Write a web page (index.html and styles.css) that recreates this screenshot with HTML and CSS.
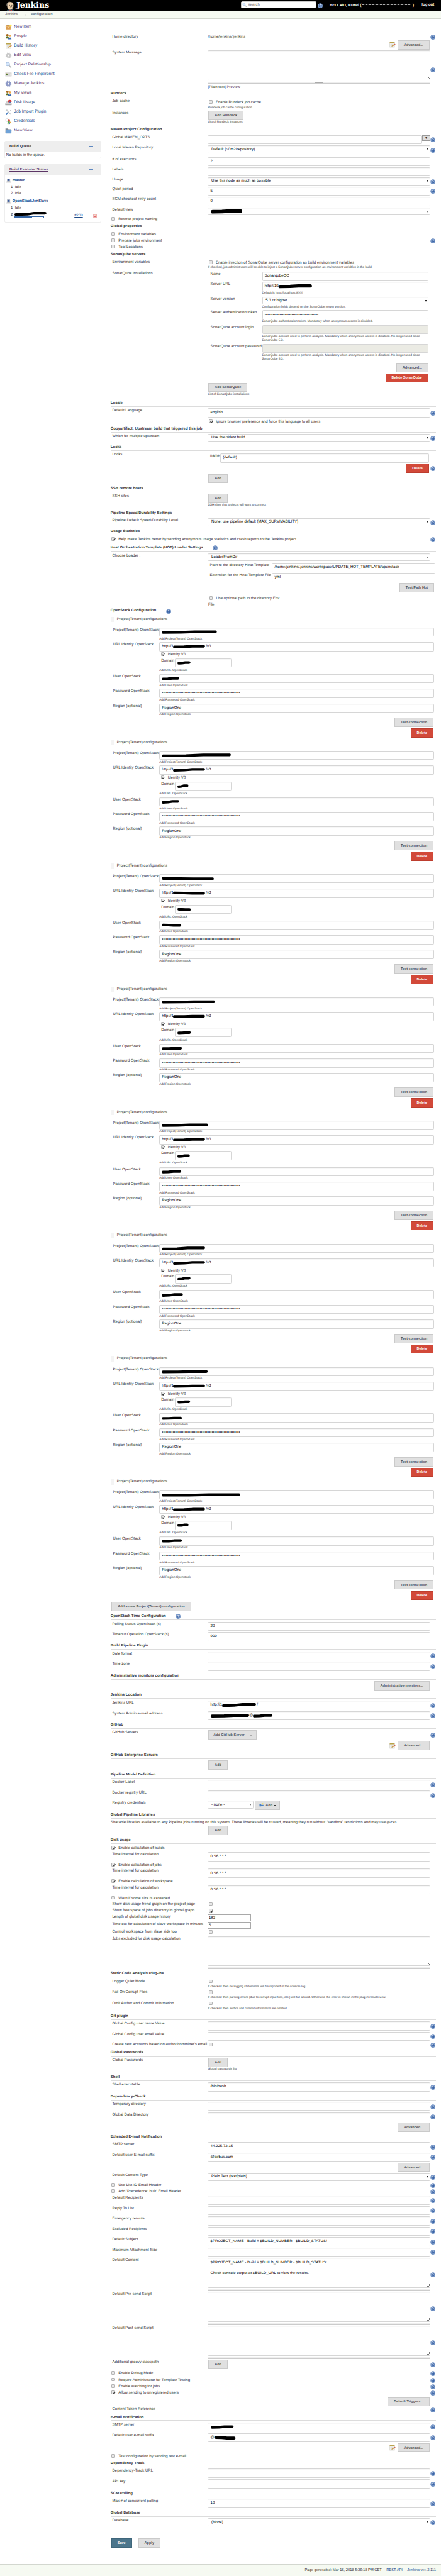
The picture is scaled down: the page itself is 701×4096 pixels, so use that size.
FILE: index.html
```html
<!DOCTYPE html>
<html lang="en">
<head>
<meta charset="utf-8">
<title>Configure System [Jenkins]</title>
<link rel="stylesheet" href="styles.css">
</head>
<body>
<svg class="sprite" aria-hidden="true">
  <symbol id="i-help" viewBox="0 0 16 16"><circle cx="8" cy="8" r="7.3" fill="#6489c0"/><circle cx="8" cy="8" r="5.8" fill="#3c66a8" stroke="#c3d3ea" stroke-width="1"/><path d="M6 6.400c0-2.600 4.200-2.400 4 0C9.900 7.700 8.100 7.700 8.100 9.200M8.100 10.600v1.300" fill="none" stroke="#fff" stroke-width="1.500"/></symbol>
  <symbol id="i-notepad" viewBox="0 0 24 24"><path d="M3 4h18v17H3z" fill="#f2f2ee" stroke="#bdbdb6"/><path d="M3 2h18v4H3z" fill="#b9a24a"/><path d="M6 10h9M6 13h6M6 16h5" stroke="#c2c2c2"/><path d="M10 18l2-4 10-5 1 3-10 5z" fill="#e0a03c" stroke="#8f6a28" stroke-width=".6"/><path d="M20 10l3-1 1 2-3 1z" fill="#d9534f"/></symbol>
  <symbol id="i-box" viewBox="0 0 24 24"><path d="M4 11h16v9H4z" fill="#dd9f50"/><path d="M1 9l4-4h14l4 4-3 3H4z" fill="#edbb74" stroke="#c98a3a" stroke-width=".7"/><path d="M5 6h13l2 3H4z" fill="#a86f2c"/><path d="M9 12h6v3H9z" fill="#f6dba8"/><circle cx="20" cy="5" r="3.500" fill="#ffe94a"/></symbol>
  <symbol id="i-people" viewBox="0 0 24 24"><circle cx="8" cy="7" r="4.800" fill="#a8691f"/><path d="M2 19c0-9 12-9 12 0z" fill="#5c7020"/><circle cx="17" cy="9" r="4.500" fill="#f0a848"/><path d="M10 22c0-10 13-10 13 0z" fill="#3a6cb2"/><path d="M16 14h3l-1.500 5z" fill="#fff"/></symbol>
  <symbol id="i-gear" viewBox="0 0 24 24"><circle cx="12" cy="12" r="8.700" fill="none" stroke="currentColor" stroke-width="5" stroke-dasharray="3.900 2.930"/><circle cx="12" cy="12" r="5.600" fill="none" stroke="currentColor" stroke-width="5"/></symbol>
  <symbol id="i-search" viewBox="0 0 24 24"><path d="M14 14l8 8" stroke="#b5b8bc" stroke-width="4"/><circle cx="9.500" cy="9" r="7" fill="#d6e7fb" stroke="#a4bcdc" stroke-width="2"/></symbol>
  <symbol id="i-card" viewBox="0 0 24 24"><path d="M1 6h22v13H1z" fill="#e9e9e7" stroke="#c4c4c2"/><circle cx="6" cy="10" r="2" fill="#a06a28"/><path d="M3 14c0-4 6-4 6 0z" fill="#50782a"/><path d="M11 9h9M11 12h7M4 16h15" stroke="#b2b2b2"/></symbol>
  <symbol id="i-disk" viewBox="0 0 24 24"><path d="M5 8h14l4 7v6H1v-6z" fill="#d4d4d4" stroke="#a5a5a5"/><path d="M1 16h22v5H1z" fill="#a7a7a7"/><ellipse cx="17" cy="7" rx="6.500" ry="5" fill="#dc3636"/><path d="M17 7l4 4a6 5 0 0 1-6 .5z" fill="#4577c4"/></symbol>
  <symbol id="i-tools" viewBox="0 0 24 24"><path d="M4 4l17 17" stroke="#c6cacd" stroke-width="3.500"/><path d="M2 5l3 3 3-3-3-3" fill="none" stroke="#c6cacd" stroke-width="2"/><path d="M22 3L12 13" stroke="#b7bcc2" stroke-width="2"/><path d="M11 13l-8 9" stroke="#4f83c4" stroke-width="5"/></symbol>
  <symbol id="i-keys" viewBox="0 0 24 24"><circle cx="7" cy="7" r="5" fill="none" stroke="#c0c4c8" stroke-width="2.200"/><path d="M12 8l9 10" stroke="#e0a63a" stroke-width="3.500"/><path d="M13 8l3 13" stroke="#3b72c0" stroke-width="4"/><path d="M13 8l-3 13" stroke="#59ad47" stroke-width="4"/><circle cx="14" cy="8" r="3.500" fill="#d84836"/></symbol>
  <symbol id="i-folder" viewBox="0 0 24 24"><path d="M1 3h9l2 3h9v15H1z" fill="#7f8b97"/><path d="M3 8h20l-1 13H2z" fill="#6ea2d8" stroke="#4b80ba" stroke-width=".7"/></symbol>
  <symbol id="i-computer" viewBox="0 0 16 16"><path d="M3 1h10v9H3z" fill="#3557a0" stroke="#b9bcc0" stroke-width="1.500"/><path d="M1 11h14l1 4H0z" fill="#cfd0d0" stroke="#999" stroke-width=".6"/></symbol>
  <symbol id="i-key" viewBox="0 0 16 16"><path d="M1 6h6v2h8v3H7v3H1z" fill="#4b82c4"/><circle cx="12" cy="5" r="2.500" fill="#fbe24c"/></symbol>
  <symbol id="i-butler" viewBox="0 0 30 34"><path d="M2 34c0-6 7-8 13-8s13 2 13 8z" fill="#335061"/><path d="M4 12C4 0 24-2 25 11c1 10-4 17-11 17C8 28 4 22 4 12z" fill="#eed2b0" stroke="#2b2118" stroke-width=".8"/><path d="M3 16C0 4 9 0 14 1 8 3 7 8 7 14z" fill="#8d8478"/><path d="M11 13h3M18 13h3M14 19c2-2 6-2 7 0" stroke="#32281f" stroke-width="1.500" fill="none"/><path d="M10 28l5 2 5-2v6l-5-2-5 2z" fill="#d33833"/></symbol>
</svg>

<div class="page">
  <header class="header">
    <a class="logo"><svg class="butler"><use href="#i-butler"/></svg><span>Jenkins</span></a>
    <div class="search"><svg><use href="#i-search"/></svg><span>search</span></div>
    <svg class="icon-help header-help"><use href="#i-help"/></svg>
    <div class="login"><b>BELLAID, Kamel (</b><i class="masked"></i><b>)</b><b class="logout">log out</b></div>
  </header>
  <nav class="breadcrumbs"><a>Jenkins</a><i class="crumb-arrow"></i><a>configuration</a></nav>

  <div class="columns">
    <aside class="side">
      <ul class="tasks">
        <li class="visited"><svg><use href="#i-box"/></svg>New Item</li>
        <li class="visited"><svg><use href="#i-people"/></svg>People</li>
        <li><svg><use href="#i-notepad"/></svg>Build History</li>
        <li class="visited"><svg class="gear-grey"><use href="#i-gear"/></svg>Edit View</li>
        <li class="visited"><svg><use href="#i-search"/></svg>Project Relationship</li>
        <li><svg><use href="#i-card"/></svg>Check File Fingerprint</li>
        <li class="visited"><svg class="gear-blue"><use href="#i-gear"/></svg>Manage Jenkins</li>
        <li class="visited"><svg><use href="#i-people"/></svg>My Views</li>
        <li><svg><use href="#i-disk"/></svg>Disk Usage</li>
        <li><svg><use href="#i-tools"/></svg>Job Import Plugin</li>
        <li><svg><use href="#i-keys"/></svg>Credentials</li>
        <li class="visited"><svg><use href="#i-folder"/></svg>New View</li>
      </ul>

      <section class="pane queue">
        <h3>Build Queue<i class="collapse"></i></h3>
        <p>No builds in the queue.</p>
      </section>

      <section class="pane executors">
        <h3><u>Build Executor Status</u><i class="collapse"></i></h3>
        <div class="node"><svg><use href="#i-computer"/></svg>master</div>
        <div class="exec"><span>1</span>Idle</div>
        <div class="exec"><span>2</span>Idle</div>
        <div class="node second"><svg><use href="#i-computer"/></svg>OpenStackJenSlave</div>
        <div class="exec"><span>1</span>Idle</div>
        <div class="exec running">
          <span>2</span>
          <div class="job"><svg class="scribble" width="98" height="12" viewBox="0 0 98 12"><path d="M4 8L40 7 60 4H94" /></svg><div class="progress"><i></i></div></div>
          <a>#230</a><i class="stop">×</i>
        </div>
      </section>
    </aside>

    <main class="form" id="form"></main>
  </div>

  <footer class="footer"><span>Page generated: Mar 16, 2018 5:36:18 PM CET</span><a>REST API</a><a>Jenkins ver. 2.111</a></footer>
</div>
<script src="form.js"></script>
</body>
</html>
```
FILE: styles.css
```css
* { box-sizing: border-box; }
html, body { margin: 0; overflow: hidden; background: #fff; }
.sprite { display: none; }
.page {
  zoom: .5188;
  width: 1351.500px;
  height: 7896px;
  display: flex;
  flex-direction: column;
  font: 11.700px/16px "Liberation Sans", Arial, sans-serif;
  color: #333;
  text-rendering: geometricPrecision;
}
svg { display: block; flex: none; }
h2, h3, p, ul { margin: 0; padding: 0; font-size: inherit; }
ul { list-style: none; }
.icon-help { width: 16px; height: 16px; }

/* header */
.header { height: 35px; flex: none; background: #000; color: #fff; display: flex; align-items: flex-start; padding-left: 17px; overflow: hidden; }
.logo { display: flex; width: 722px; }
.butler { width: 29px; height: 32px; margin-top: 3px; }
.logo span { font: bold 24px/32px "DejaVu Serif", serif; margin-left: 4px; }
.search { width: 231px; height: 22px; margin-top: 4px; background: #fff; border: 1px solid #ccc; border-radius: 4px; display: flex; align-items: center; gap: 3px; padding: 0 2px; color: #757575; font-size: 12px; }
.search svg { width: 14px; height: 14px; }
.header-help { margin: 9px 0 0 3px; }
.login { display: flex; align-items: center; margin: 10px 0 0 21px; white-space: nowrap; font-size: 11.500px; }
.masked { width: 152px; height: 1px; margin: -8px 4px 0 1px; background: repeating-linear-gradient(90deg, #aaa 0 6px, #222 6px 11px); }
.logout { margin-left: 17px; padding-left: 5px; border-left: 2px solid #4a90c8; line-height: 15px; }
.breadcrumbs { height: 23px; flex: none; background: #f6faf2; border-bottom: 1px solid #d3d7cf; display: flex; align-items: center; padding-left: 16px; color: #4d545d; }
.crumb-arrow { margin: 0 15px 0 20px; border: 3px solid transparent; border-left: 4px solid #bbb; border-right: 0; }
.columns { display: flex; flex: 1; }

/* sidebar */
.side { width: 339px; flex: none; padding: 10.500px 0 0 14px; }
.tasks li { height: 28.900px; display: flex; align-items: center; gap: 7px; padding-left: 1px; font-size: 12.700px; color: #204a87; }
.tasks svg { width: 21px; height: 20px; }
.tasks .visited, .executors u { color: #5c3566; }
.tasks .gear-grey { color: #c9c9c9; }
.tasks .gear-blue { color: #8d99c6; }
.pane { width: 297px; border: 1px solid #eee; border-radius: 4px; }
.pane h3 { height: 31px; background: #eee; display: flex; justify-content: space-between; align-items: center; padding: 0 24px 0 13px; font-size: 11.400px; }
.collapse { width: 11px; height: 4px; background: #8fb0dc; border: 1px solid #5f88c0; }
.queue { height: 53px; margin-top: 17px; }
.queue p { padding: 3px; }
.executors { height: 179px; margin-top: 18px; padding-bottom: 4px; }
.node { display: flex; gap: 5px; height: 18px; margin-top: 9px; padding-left: 3px; font-weight: bold; font-size: 11.500px; color: #204a87; align-items: center; }
.node svg { width: 14px; height: 13px; }
.node + .exec { margin-top: 4px; }
.exec { display: flex; height: 20px; padding-left: 17px; }
.exec span { width: 13px; }
.node.second { margin-top: 2px; }
.job { width: 96px; margin-left: -1px; }
.running .scribble { margin-top: -1px; }
.progress { width: 90px; height: 6px; border: 1px solid #3465a4; margin-top: 1px; }
.progress i { display: block; width: 59%; height: 100%; background: #3465a4; }
.running a { margin: 3px 0 0 87px; color: #204a87; text-decoration: underline; width: 58px; }
.stop { width: 11px; height: 11px; margin-top: 5px; background: #df6a6a; border: 1px solid #f0b0b0; color: #fff; font: bold 10px/9px "Liberation Sans", sans-serif; text-align: center; }

/* form rows */
.form { width: 996px; padding-top: 47.200px; display: flex; flex-direction: column; }
.row { flex: none; display: grid; grid-template-columns: 298px 682px 16px; align-items: start; }
.label { padding-left: 5px; white-space: nowrap; }
.section { flex: none; }
.section h2 { height: 21px; padding-top: 2px; border-bottom: 1px solid #dcdcdc; display: flex; gap: 30px; font-size: 11.600px; font-weight: bold; white-space: nowrap; }
.section .icon-help { margin-top: 1px; }
.input, .select, .area { background: #fff; border: 1px solid #d6d6d6; border-radius: 3px; color: #000; box-shadow: inset 0 1px 1px #0001; font-size: 11.800px; white-space: nowrap; }
.input { height: 28px; padding: 0 6px; display: flex; align-items: center; }
.select { height: 24.500px; padding: 0 5px 0 9px; display: flex; align-items: center; justify-content: space-between; }
.select::after { content: ""; border: 3.500px solid transparent; border-top: 6px solid #000; border-bottom: 0; }
.input.disabled { background: #ebebe4; }
.combo { display: flex; align-items: flex-start; }
.combo .input { width: 656px; }
.combo button { width: 26px; height: 18px; padding: 0; border: 1px solid #999; background: #ddd; color: #000; font-size: 9px; line-height: 14px; }
.area { height: 91.500px; padding: 5px 6px; white-space: pre; position: relative; }
.area::after { content: ""; position: absolute; right: 1px; bottom: 1px; width: 8px; height: 8px; background: linear-gradient(135deg, transparent 46%, #777 46% 56%, transparent 56% 72%, #777 72% 82%, transparent 82%); }
.grip { height: 6px; margin-top: 4px; background: #eee; border: 1px solid #ccc; border-top: 0; display: flex; justify-content: center; align-items: center; }
.grip i { width: 23px; height: 2px; background: #aaa; }
.preview { margin-top: 4px; }
.preview a { color: #5c3566; text-decoration: underline; }
.desc { font-size: 9.350px; line-height: 13px; margin-top: 2.500px; }
.check { display: flex; height: 16px; align-items: flex-start; white-space: nowrap; }
.box { width: 11px; height: 11px; flex: none; margin: 0 10px 0 3px; border: 1px solid #b4b4b4; border-radius: 2px; background: #e8e8e8; }
.box.on { position: relative; }
.box.on::after { content: ""; position: absolute; left: 3px; top: 0; width: 3px; height: 6px; border: solid #333; border-width: 0 2px 2px 0; transform: rotate(40deg); }
.lowered { padding-top: 2px; }
.btn { display: inline-flex; align-items: center; justify-content: center; height: 28px; margin-left: 2px; border: 1px solid #cacaca; background: #e0e0e0; color: #4d545d; font: bold 10.700px/16px "Liberation Sans", Arial, sans-serif; white-space: nowrap; padding: 0 0 2px; gap: 5px; }
.btn.red { background: #d24939; border-color: #bd3d2e; color: #fff; }
.btn.blue { background: #4b758b; border-color: #3f667b; color: #fff; }
.btn .caret { border: 3px solid transparent; border-top: 4px solid #000; border-bottom: 0; margin-top: 2px; }
.btn svg { width: 14px; height: 14px; }
.btn .caret.far { margin-left: 13px; }
.actions { display: flex; justify-content: flex-end; align-items: center; gap: 4px; padding-right: 3px; height: 28px; }
.actions svg { width: 21px; height: 20px; }
.plain { width: 133px; height: 21px; border: 1px solid #a9a9a9; color: #000; padding: 2px 1px; font-size: 11.800px; }
.scribble { fill: none; stroke: #000; stroke-width: 8; stroke-linecap: round; stroke-linejoin: round; overflow: visible; }
.mono { font: 10px "Liberation Mono", monospace; }
.credentials { display: flex; gap: 3px; }
.credentials .select { width: 139px; }

/* SonarQube installation */
.sonar { padding: 3.500px 6px 0 0; }
.sonar > div { display: grid; grid-template-columns: 158px 510px; padding-left: 8px; }
.sonar .actions { display: flex; padding-right: 1px; }
.locks { padding: 3px 5px 0 7px; }
.locks .pair { display: grid; grid-template-columns: 31px 639px; height: 31px; }
.locks .actions { padding: 0; margin-bottom: 4px; }
.loader .select { margin-bottom: 5px; }
.loader .pair { display: grid; grid-template-columns: 190.500px 500px; margin-left: 6px; height: 31px; white-space: nowrap; }
.loader .actions { width: 696px; }
.loader .check { margin: 13px 0 2px 1px; }
.loader .wrap { padding-left: 1px; }

/* OpenStack tenants */
.tenant { height: 377.650px; flex: none; display: grid; grid-template-columns: 149px 842px; grid-template-rows: 35px 45px 97.400px 45.300px 44.800px 44.200px 32.300px 33px; align-content: start; }
.tenant-title { grid-column: 1 / 3; display: flex; gap: 9px; padding: 2px 0 0 1px; }
.handle { width: 9px; height: 16px; background: radial-gradient(#ccc 40%, #f4f4f4 45%) 0 0 / 3px 3px; }
.tenant .label { padding: 0 0 0 7px; }
.tenant .check { margin-top: 3px; padding-left: 2px; }
.tenant .domain { display: grid; grid-template-columns: 48px 174px; margin-top: 2px; height: 29px; }
.tenant .domain span { padding-left: 6px; }
.tenant .actions { grid-column: 1 / 3; padding-right: 2px; }
.scheme { width: 35px; }
.scribble.after { margin-right: 2px; }

.submit { display: flex; gap: 18px; }
.footer { height: 37.400px; flex: none; background: #f6faf2; border-top: 1px solid #d3d7cf; display: flex; justify-content: flex-end; align-items: center; gap: 14px; padding-right: 16px; font-size: 11.150px; }
.footer a { color: #204a87; text-decoration: underline; }
```
FILE: form.js
```js
// Renders the system configuration form from a list of row descriptions.
const HELP = '<svg class="icon-help"><use href="#i-help"/></svg>';
const NOTE = '<svg><use href="#i-notepad"/></svg>';

const input = (v = '', cls = '') => `<div class="input ${cls}">${v}</div>`;
const select = v => `<div class="select">${v}</div>`;
const area = (v = '') => `<div class="area">${v}</div><div class="grip"><i></i></div>`;
const desc = (t, mt) => `<div class="desc"${mt ? ` style="margin-top:${mt}px"` : ''}>${t}</div>`;
const btn = (t, w, cls = '') => `<button class="btn ${cls}" style="width:${w}px">${t}</button>`;
const check = (t = '', on = false) => `<div class="check"><i class="box ${on ? 'on' : ''}"></i><span>${t}</span></div>`;
const lowered = html => `<div class="lowered">${html}</div>`;
const actions = (b, icon = '') => `<div class="actions">${icon}${b}</div>`;
const dots = n => input('•'.repeat(n));

// Hand-drawn redaction stroke.
const scribble = (w, up = 1, sw = 8) =>
  `<svg class="scribble after" width="${w}" height="12" style="stroke-width:${sw}"><path d="M4 ${6 + up}L${w * .35} ${6 + up / 2} ${w * .6} ${6 - up}H${w - 4}"/></svg>`;

const row = (h, label, field = '', help = false, helpTop = 7) =>
  `<div class="row" style="height:${h}px"><div class="label">${label}</div><div class="field">${field}</div>` +
  `<div style="margin-top:${helpTop}px">${help ? HELP : ''}</div></div>`;
const section = (h, title, help = false) =>
  `<div class="section" style="height:${h}px"><h2>${title}${help ? HELP : ''}</h2></div>`;
const flag = (h, t, on = false, help = false) =>
  `<div class="row" style="height:${h}px">${check(t, on)}<div></div>${help ? HELP : ''}</div>`;

const tenant = ([project, domain, user, up]) => `
<div class="tenant">
  <div class="tenant-title"><i class="handle"></i>Project(Tenant) configurations</div>
  <div class="label">Project(Tenant) OpenStack</div><div>${input(scribble(project, up))}${desc('Add Project(Tenant) OpenStack')}</div>
  <div class="label">URL Identity OpenStack</div><div>${input(`<span class="scheme">http://1</span>${scribble(98, up)}/v3`)}
    ${check('Identity V3', true)}
    <div class="domain"><span>Domain</span>${input(scribble(domain, up))}</div>${desc('Add URL OpenStack', 4)}</div>
  <div class="label">User OpenStack</div><div>${input(scribble(user, up))}${desc('Add User OpenStack')}</div>
  <div class="label">Password OpenStack</div><div>${dots(58)}${desc('Add Password OpenStack')}</div>
  <div class="label">Region (optional)</div><div>${input('RegionOne')}${desc('Add Region Openstack')}</div>
  ${actions(btn('Test connection', 119))}
  ${actions(btn('Delete', 70, 'red'))}
</div>`;

const tenants = [
  [169, 40, 54, 1], [212, 34, 54, 1.5], [160, 41, 60, -.5], [164, 41, 62, .5],
  [142, 38, 60, 1], [133, 40, 65, 1.5], [141, 39, 62, .5], [241, 34, 62, .8],
];

const sonarRow = (h, label, field) => `<div style="height:${h}px"><span>${label}</span><div>${field}</div></div>`;
const sonarNote = 'SonarQube account used to perform analysis. Mandatory when anonymous access is disabled. No longer used since SonarQube 5.3.';

const sonar = `<div class="sonar">
${sonarRow(30.5, 'Name', input('SonarqubeOC'))}
${sonarRow(45.4, 'Server URL', input('http://10' + scribble(101, 1, 10)) + desc('Default is http://localhost:9000'))}
${sonarRow(42, 'Server version', select('5.3 or higher') + desc('Configuration fields depend on the SonarQube server version.'))}
${sonarRow(44.9, 'Server authentication token', dots(40) + desc('SonarQube authentication token. Mandatory when anonymous access is disabled.'))}
${sonarRow(58, 'SonarQube account login', input('', 'disabled') + desc(sonarNote))}
${sonarRow(57.5, 'SonarQube account password', input('', 'disabled') + desc(sonarNote))}
<div class="actions" style="height:31px">${btn('Advanced...', 98)}</div>
<div class="actions" style="height:31px">${btn('Delete SonarQube', 131, 'red')}</div></div>
${btn('Add SonarQube', 119)}${desc('List of SonarQube installations')}`;

const locks = `<div class="locks"><div class="pair"><span>name</span>${input('(default)')}</div>
${actions(btn('Delete', 70, 'red'))}</div>${btn('Add', 58)}`;

const loader = `<div class="loader">${select('LoaderFromDir')}
<div class="pair"><span>Path to the directory Heat Template</span>${input('/home/jenkins/.jenkins/workspace/UPDATE_HOT_TEMPLATE/openstack')}</div>
<div class="pair"><span>Extension for the Heat Template File</span>${input('yml')}</div>
${actions(btn('Test Path Hot', 106))}
${check('Use optional path to the directory Env', false)}<div class="wrap">File</div></div>`;

const advanced = btn('Advanced...', 98);
const cron = '0 */6 * * *';

document.getElementById('form').innerHTML = [
  row(19, 'Home directory', '/home/jenkins/.jenkins', true, 1),
  row(31, '', actions(advanced, NOTE)),
  row(123, 'System Message', area() + '<div class="preview">[Plain text] <a>Preview</a></div>', true, 51),

  section(25, 'Rundeck'),
  row(37, 'Job cache', lowered(lowered(check('Enable Rundeck job cache'))) + desc('Rundeck job cache configuration', 2)),
  row(48, 'Instances', btn('Add Rundeck', 107) + desc('List of Rundeck instances')),

  section(26, 'Maven Project Configuration'),
  row(32, 'Global MAVEN_OPTS', `<div class="combo">${input()}<button>▼</button></div>`, true),
  row(35, 'Local Maven Repository', select('Default (~/.m2/repository)'), true, 6),
  row(31, '# of executors', input('2')),
  row(31.3, 'Labels', input()),
  row(28.9, 'Usage', select('Use this node as much as possible'), true, 6),
  row(31.8, 'Quiet period', input('5'), true),
  row(31.5, 'SCM checkout retry count', input('0')),
  row(29.5, 'Default view', select(scribble(93, 1, 11))),
  flag(20, 'Restrict project naming'),

  section(26.6, 'Global properties'),
  flag(19.4, 'Environment variables'),
  flag(19.5, 'Prepare jobs environment', false, true),
  flag(20.5, 'Tool Locations'),

  section(25.5, 'SonarQube servers'),
  row(33.5, 'Environment variables', lowered(check('Enable injection of SonarQube server configuration as build environment variables')) + desc('If checked, job administrators will be able to inject a SonarQube server configuration as environment variables in the build.', 1)),
  row(396, 'SonarQube installations', sonar),

  section(25.4, 'Locale'),
  row(33.6, 'Default Language', input('english'), true),
  row(19.7, '', check('Ignore browser preference and force this language to all users', true)),

  section(25.3, 'Copyartifact: Upstream build that triggered this job'),
  row(31.5, 'Which for multiple upstream', select('Use the oldest build'), true, 6),
  section(25.5, 'Locks'),
  row(101.5, 'Locks', locks, true, 41),
  section(25.5, 'SSH remote hosts'),
  row(48.5, 'SSH sites', btn('Add', 58) + desc('SSH sites that projects will want to connect')),
  section(25.8, 'Pipeline Speed/Durability Settings'),
  row(31.2, 'Pipeline Default Speed/Durability Level', select('None: use pipeline default (MAX_SURVIVABILITY)'), true, 6),
  section(27, 'Usage Statistics'),
  flag(22.5, 'Help make Jenkins better by sending anonymous usage statistics and crash reports to the Jenkins project.', true, true),
  section(27, 'Heat Orchestration Template (HOT) Loader Settings', true),
  row(167, 'Choose Loader :', loader),

  section(26, 'OpenStack Configuration', true),
  ...tenants.map(tenant),
  `<div style="height:33.8px">${btn('Add a new Project(Tenant) configuration', 245)}</div>`,

  section(27.3, 'OpenStack Time Configuration', true),
  row(31.2, 'Polling Status OpenStack (s)', input('20')),
  row(33, 'Timeout Operation OpenStack (s)', input('900')),
  section(25.9, 'Build Pipeline Plugin'),
  row(32, 'Date format', input(), true),
  row(34.1, 'Time zone', input(), true),
  section(25.7, 'Administrative monitors configuration'),
  row(33.3, '', actions(btn('Administrative monitors...', 170))),
  section(26, 'Jenkins Location'),
  row(32, 'Jenkins URL', input('http://1' + scribble(104, 2) + '/'), true),
  row(34, 'System Admin e-mail address', input(scribble(117, 1, 9) + '@' + scribble(60)), true),
  section(25.5, 'GitHub'),
  row(33, 'GitHub Servers', btn('Add GitHub Server<i class="caret far"></i>', 147), true),
  row(33.5, '', actions(advanced, NOTE)),
  section(25.5, 'GitHub Enterprise Servers'),
  row(34.5, '', btn('Add', 58)),
  section(25.7, 'Pipeline Model Definition'),
  row(32, 'Docker Label', input(), true),
  row(31.8, 'Docker registry URL', input(), true),
  row(34, 'Registry credentials', `<div class="credentials">${select('- none -')}${btn('<svg><use href="#i-key"/></svg>Add<i class="caret"></i>', 77)}</div>`),
  section(26, 'Global Pipeline Libraries'),
  `<div style="height:17px">Sharable libraries available to any Pipeline jobs running on this system. These libraries will be trusted, meaning they run without “sandbox” restrictions and may use <span class="mono">@Grab</span>.</div>`,
  row(34.5, '', btn('Add', 58)),

  section(27, 'Disk usage'),
  flag(18.9, 'Enable calculation of builds', true),
  row(32.6, 'Time interval for calculation', input(cron)),
  flag(18.4, 'Enable calculation of jobs', true),
  row(32.6, 'Time interval for calculation', input(cron)),
  flag(18.3, 'Enable calculation of workspace', true),
  row(32.2, 'Time interval for calculation', input(cron)),
  flag(17.5, 'Warn if some size is exceeded'),
  row(20, 'Show disk usage trend graph on the project page', lowered(check())),
  row(20, 'Show free space of jobs directory in global graph', lowered(check('', true))),
  row(23, 'Length of global disk usage history', '<div class="plain">183</div>'),
  row(23, 'Time out for calculation of slave workspace in minutes', '<div class="plain">5</div>'),
  row(20.4, 'Control workspace from slave side too', lowered(check())),
  row(105.1, 'Jobs excluded for disk usage calculation', area()),

  section(25.5, 'Static Code Analysis Plug-ins'),
  row(34, 'Logger Quiet Mode', lowered(check()) + desc('If checked then no logging statements will be reported in the console log.', 1.5)),
  row(34, 'Fail On Corrupt Files', lowered(check()) + desc('If checked then parsing errors (due to corrupt input files, etc.) will fail a build. Otherwise the error is shown in the plug-in results view.', 1.5)),
  row(36.5, 'Omit Author and Commit Information', lowered(check()) + desc('If checked then author and commit information are omitted.', 1.5)),

  section(25.9, 'Git plugin'),
  row(32, 'Global Config user.name Value', input(), true),
  row(31.6, 'Global Config user.email Value', input(), true),
  row(23.5, "Create new accounts based on author/committer's email", lowered(check()), true, 2),
  section(25.5, 'Global Passwords'),
  row(48.5, 'Global Passwords', btn('Add', 58) + desc('Global passwords list')),
  section(25.9, 'Shell'),
  row(34.1, 'Shell executable', input('/bin/bash'), true),
  section(25.5, 'Dependency-Check'),
  row(32, 'Temporary directory', input(), true),
  row(32, 'Global Data Directory', input(), true),
  row(33.5, '', actions(advanced)),

  section(26, 'Extended E-mail Notification'),
  row(32, 'SMTP server', input('44.225.72.15'), true),
  row(31.5, 'Default user E-mail suffix', input('@airbus.com'), true),
  row(31.4, '', actions(advanced)),
  row(30.3, 'Default Content Type', select('Plain Text (text/plain)'), true, 6),
  flag(20.3, 'Use List-ID Email Header', false, true),
  flag(18.6, "Add 'Precedence: bulk' Email Header", false, true),
  row(31.7, 'Default Recipients', input(), true),
  row(32.1, 'Reply To List', input(), true),
  row(31.8, 'Emergency reroute', input(), true),
  row(32.1, 'Excluded Recipients', input(), true),
  row(31.7, 'Default Subject', input('$PROJECT_NAME - Build # $BUILD_NUMBER - $BUILD_STATUS!'), true),
  row(32.2, 'Maximum Attachment Size', input(), true),
  row(104.1, 'Default Content', area('$PROJECT_NAME - Build # $BUILD_NUMBER - $BUILD_STATUS:\n\nCheck console output at $BUILD_URL to view the results.'), true, 43),
  row(104.1, 'Default Pre-send Script', area(), true, 43),
  row(103.6, 'Default Post-send Script', area(), true, 43),
  row(34.6, 'Additional groovy classpath', btn('Add', 58), true, 8),
  flag(20, 'Enable Debug Mode', false, true),
  flag(20, 'Require Administrator for Template Testing', false, true),
  flag(20, 'Enable watching for jobs', false, true),
  flag(19.8, 'Allow sending to unregistered users', true, true),
  row(30.6, '', actions(btn('Default Triggers...', 128))),
  row(21.5, 'Content Token Reference', '', true, 1),

  section(25.7, 'E-mail Notification'),
  row(32.1, 'SMTP server', input(scribble(70)), true),
  row(31.7, 'Default user e-mail suffix', input('@' + scribble(64, -1, 9)), true),
  row(32.7, '', actions(advanced, NOTE)),
  flag(19.8, 'Test configuration by sending test e-mail'),
  section(25.7, 'Dependency-Track'),
  row(32.1, 'Dependency-Track URL', input(), true),
  row(34.2, 'API key', input(), true),
  section(25.9, 'SCM Polling'),
  row(34.1, 'Max # of concurrent polling', input('10'), true),
  section(25.8, 'Global Database'),
  row(61.7, 'Database', select('(None)'), true, 6),
  `<div class="submit">${btn('Save', 63, 'blue')}${btn('Apply', 67)}</div>`,
].join('');
```
